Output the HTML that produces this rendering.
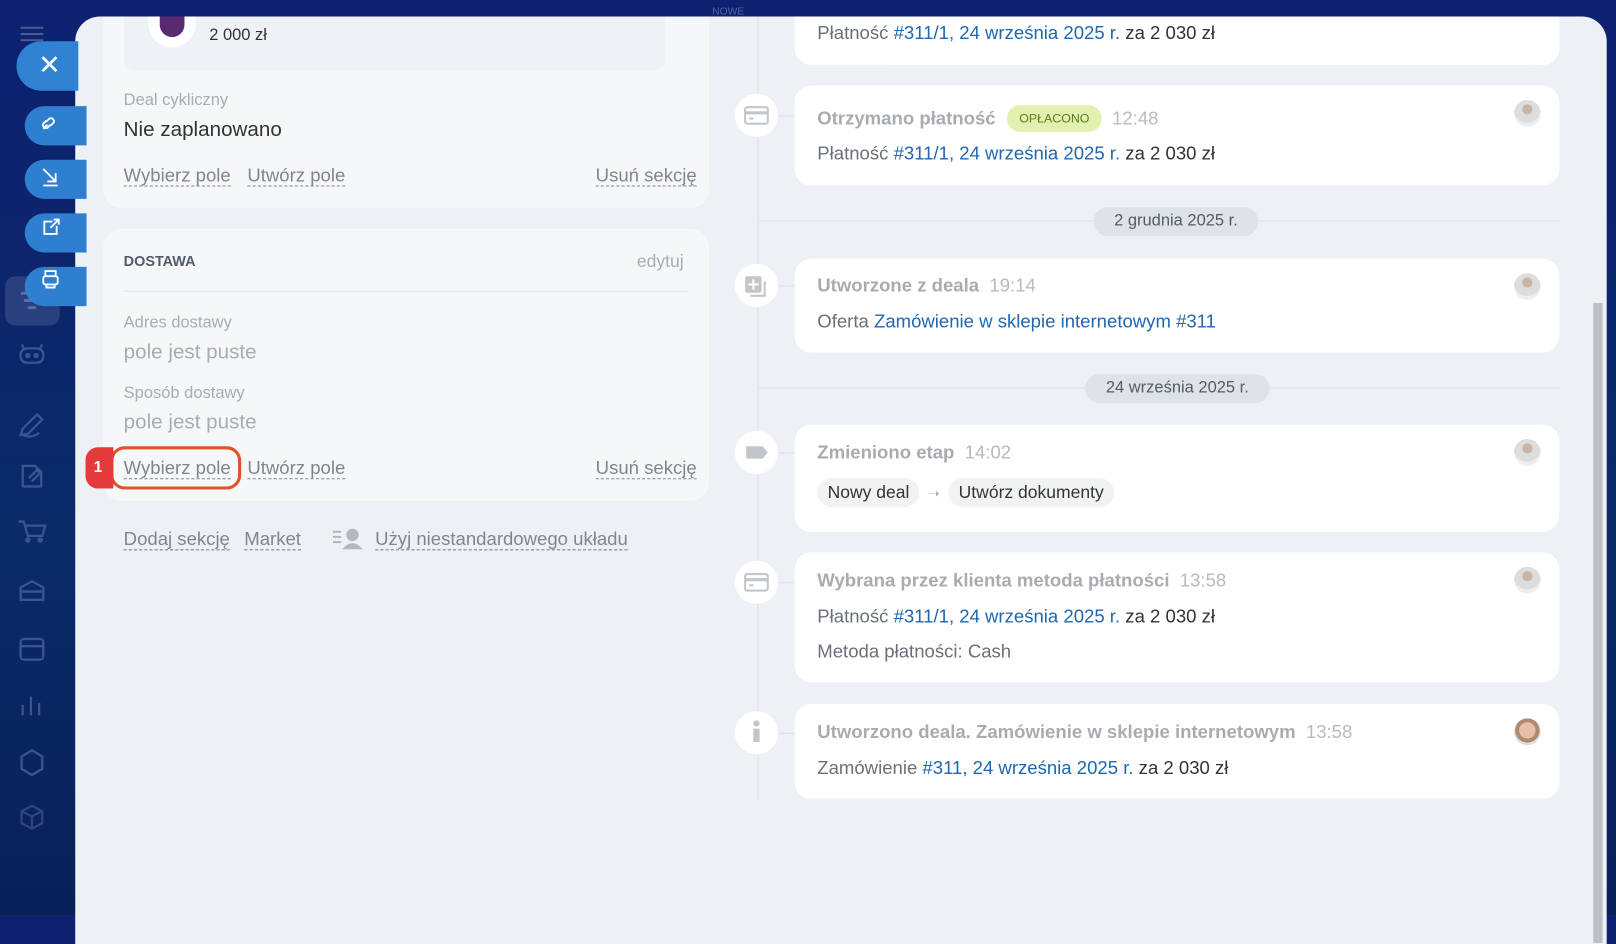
<!DOCTYPE html>
<html><head><meta charset="utf-8"><style>
*{box-sizing:border-box;margin:0;padding:0}
body{width:1616px;height:915px;overflow:hidden;font-family:"Liberation Sans",sans-serif;background:linear-gradient(180deg,#0d2170 0%,#0a2a68 60%,#082058 100%);position:relative}
#w{position:absolute;left:0;top:0;width:1568px;height:888px;transform:scale(1.0306);transform-origin:0 0}
.panel{position:absolute;left:73px;top:16px;width:1486px;height:900px;background:#edf0f4;border-radius:24px 24px 0 0}
.card{position:absolute;background:#f5f7f9;border-radius:18px}
.t{position:absolute;white-space:nowrap}
.lbl{color:#a8adb3;font-size:16px}
.val{color:#333;font-size:20px}
.empty{color:#a8adb3;font-size:20px}
.lnk{color:#80868e;font-size:18px;border-bottom:1px dashed #80868e;line-height:20px}
.tl{position:absolute;left:735px;width:1px;background:#dde1e6}
.ev{position:absolute;left:771px;width:742px;background:#fff;border-radius:16px}
.ic{position:absolute;left:713px;width:42px;height:42px;border-radius:50%;background:#fff}
.conn{position:absolute;left:755px;width:16px;height:1px;background:#dde1e6}
.h{color:#a8acb1;font-size:18px;font-weight:bold}
.tm{color:#b6bbc0;font-size:18px;font-weight:normal;margin-left:10px}
.b{color:#6a7078;font-size:18px}
.b a{color:#2067b0;text-decoration:none}
.b span{color:#333}
.av{position:absolute;right:18px;top:14px;width:26px;height:26px;border-radius:50%;background:radial-gradient(circle at 50% 35%,#c9b5a5 0 22%,#ddd 24% 60%,#eee 62%)}
.date{position:absolute;height:28px;border-radius:14px;background:#dfe3e8;color:#535c69;font-size:16px;line-height:28px;padding:0 20px}
.btn{position:absolute;left:24px;width:60px;height:38px;background:#2f7fd0;border-radius:19px 0 0 19px}
.pill{display:inline-block;background:#f1f2f4;border-radius:15px;padding:4px 10px;color:#333;font-size:17px}
</style></head><body><div id="w">
<div style="position:absolute;left:20px;top:26px;width:22px;height:2px;background:#4a5a90;box-shadow:0 6px 0 #4a5a90,0 12px 0 #4a5a90"></div>
<div style="position:absolute;left:5px;top:268px;width:53px;height:48px;border-radius:10px;background:#2a3f7e"></div>
<div style="position:absolute;left:20px;top:283px;width:22px;height:3px;border-radius:2px;background:#5a6ea8;box-shadow:3px 7px 0 -0px #5a6ea8"></div>
<div style="position:absolute;left:27px;top:297px;width:8px;height:3px;border-radius:2px;background:#5a6ea8"></div>
<svg style="position:absolute;left:14px;top:330px" width="36" height="500" fill="none" stroke="#3c5490" stroke-width="2.2">
<rect x="6" y="8" width="22" height="14" rx="6"/><circle cx="13" cy="15" r="1.5"/><circle cx="21" cy="15" r="1.5"/><path d="M9 8 l-2 -4 M25 8 l2 -4"/>
<path d="M8 86 L22 72 L27 77 L13 91 L6 92 Z M8 92 q8 4 16 -2"/>
<path d="M8 122 h12 l6 6 v14 h-18 Z M14 134 l8 -8 3 3 -8 8"/>
<path d="M4 176 h5 l4 14 h14 l3 -10 h-20"/><circle cx="13" cy="194" r="1.5"/><circle cx="25" cy="194" r="1.5"/>
<path d="M6 252 v-12 l11 -6 11 6 v12 z M6 244 h22"/>
<rect x="6" y="290" width="22" height="20" rx="3"/><path d="M6 297 h22"/>
<path d="M8 364 v-10 M16 364 v-18 M24 364 v-12"/>
<path d="M17 398 l10 6 v12 l-10 6 -10 -6 v-12 z"/>
<path d="M17 452 l10 5 v12 l-10 5 -10 -5 v-12 z M7 457 l10 5 10 -5 M17 462 v12" stroke="#2c4682"/>
</svg>
<div style="position:absolute;left:691px;top:6px;color:#4d6aa0;font-size:10px">NOWE</div>
<div class="panel"></div>
<div style="position:absolute;left:1546px;top:294px;width:9px;height:621px;background:#bcc0c3"></div>
<div style="position:absolute;left:16px;top:40px;width:60px;height:48px;background:#2f83d2;border-radius:24px 0 0 24px;color:#fff;font-size:26px;line-height:46px;padding-left:21px">✕</div>
<div class="btn" style="top:103px"></div><div class="btn" style="top:155px"></div><div class="btn" style="top:207px"></div><div class="btn" style="top:259px"></div>
<svg style="position:absolute;left:36px;top:108px" width="28" height="180" fill="none" stroke="#fff" stroke-width="1.8">
<path d="M6 17 l4 -4 M9 10 l3 -3 a3 3 0 0 1 4 4 l-3 3 M13 13 l-3 3 a3 3 0 0 1 -4 -4 l3 -3" />
<path d="M6 56 l12 12 M18 60 v8 h-8 M6 72 h14"/>
<path d="M15 107 h-8 v12 h12 v-8 M13 113 l8 -8 M16 105 h5 v5"/>
<rect x="6" y="160" width="14" height="8" rx="2"/><path d="M8 160 v-5 h10 v5 M9 168 v3 h8 v-3"/>
</svg>
<div class="card" style="left:100px;top:16px;width:588px;height:186px;border-radius:0 0 18px 18px"></div>
<div style="position:absolute;left:120px;top:16px;width:526px;height:52px;background:#eef1f5;border-radius:0 0 10px 10px"></div>
<div style="position:absolute;left:144px;top:16px;width:46px;height:30px;border-radius:0 0 23px 23px;background:#fff"></div>
<div style="position:absolute;left:155px;top:16px;width:24px;height:20px;border-radius:0 0 12px 12px;background:#5a2a70"></div>
<div class="t" style="left:203px;top:26px;font-size:16px;color:#333">2 000 zł</div>
<div class="t lbl" style="left:120px;top:89px">Deal cykliczny</div>
<div class="t val" style="left:120px;top:115px">Nie zaplanowano</div>
<div class="t lnk" style="left:120px;top:160px">Wybierz pole</div>
<div class="t lnk" style="left:240px;top:160px">Utwórz pole</div>
<div class="t lnk" style="left:578px;top:160px">Usuń sekcję</div>
<div class="card" style="left:100px;top:222px;width:588px;height:264px"></div>
<div class="t" style="left:120px;top:245px;font-size:14px;font-weight:bold;color:#535c69">DOSTAWA</div>
<div class="t" style="left:618px;top:244px;font-size:17px;color:#a8adb3">edytuj</div>
<div style="position:absolute;left:120px;top:282px;width:548px;height:1px;background:#e2e5e9"></div>
<div class="t lbl" style="left:120px;top:305px">Adres dostawy</div>
<div class="t empty" style="left:120px;top:331px">pole jest puste</div>
<div class="t lbl" style="left:120px;top:373px">Sposób dostawy</div>
<div class="t empty" style="left:120px;top:399px">pole jest puste</div>
<div style="position:absolute;left:107px;top:433px;width:127px;height:42px;border:3px solid #e0522a;border-radius:14px"></div>
<div style="position:absolute;left:83px;top:434px;width:27px;height:40px;background:#e53a3a;border-radius:12px 0 0 12px;color:#fff;font-weight:bold;font-size:15px;line-height:40px;padding-left:8px">1</div>
<div class="t lnk" style="left:120px;top:444px">Wybierz pole</div>
<div class="t lnk" style="left:240px;top:444px">Utwórz pole</div>
<div class="t lnk" style="left:578px;top:444px">Usuń sekcję</div>
<div class="t lnk" style="left:120px;top:513px">Dodaj sekcję</div>
<div class="t lnk" style="left:237px;top:513px">Market</div>
<svg style="position:absolute;left:323px;top:511px" width="30" height="24" fill="#b5b9be"><rect x="0" y="4" width="8" height="2"/><rect x="0" y="9" width="8" height="2"/><rect x="0" y="14" width="8" height="2"/><circle cx="19" cy="8" r="6"/><path d="M9 22 q10 -12 20 0 z"/></svg>
<div class="t lnk" style="left:364px;top:513px">Użyj niestandardowego układu</div>
<div class="tl" style="top:16px;height:760px"></div>
<div class="ev" style="top:16px;height:47px;border-radius:0 0 16px 16px"></div>
<div class="t b" style="left:793px;top:22px">Płatność <a>#311/1, 24 września 2025 r.</a> <span>za 2 030 zł</span></div>
<div style="position:absolute;left:735px;top:214px;width:778px;height:1px;background:#dde1e6"></div>
<div style="position:absolute;left:735px;top:376px;width:778px;height:1px;background:#dde1e6"></div>
<div class="date" style="left:1061px;top:201px">2 grudnia 2025 r.</div>
<div class="date" style="left:1053px;top:363px">24 września 2025 r.</div>
<div class="ic" style="top:91px"></div><div class="conn" style="top:112px"></div>
<div class="ev" style="top:83px;height:97px"><div class="av"></div></div>
<div class="t h" style="left:793px;top:102px">Otrzymano płatność <span style="display:inline-block;background:#e3f1b0;color:#5a7b16;font-size:12px;font-weight:normal;border-radius:13px;padding:6px 12px;margin-left:6px;vertical-align:2px">OPŁACONO</span><span class="tm">12:48</span></div>
<div class="t b" style="left:793px;top:139px">Płatność <a>#311/1, 24 września 2025 r.</a> <span>za 2 030 zł</span></div>
<div class="ic" style="top:256px"></div><div class="conn" style="top:277px"></div>
<div class="ev" style="top:251px;height:91px"><div class="av"></div></div>
<div class="t h" style="left:793px;top:267px">Utworzone z deala<span class="tm">19:14</span></div>
<div class="t b" style="left:793px;top:302px">Oferta <a>Zamówienie w sklepie internetowym #311</a></div>
<div class="ic" style="top:418px"></div><div class="conn" style="top:439px"></div>
<div class="ev" style="top:412px;height:104px"><div class="av"></div></div>
<div class="t h" style="left:793px;top:429px">Zmieniono etap<span class="tm">14:02</span></div>
<div class="t" style="left:793px;top:464px"><span class="pill">Nowy deal</span> <span style="color:#aaa;font-size:13px;margin:0 4px">➝</span> <span class="pill">Utwórz dokumenty</span></div>
<div class="ic" style="top:544px"></div><div class="conn" style="top:565px"></div>
<div class="ev" style="top:536px;height:126px"><div class="av"></div></div>
<div class="t h" style="left:793px;top:553px">Wybrana przez klienta metoda płatności<span class="tm">13:58</span></div>
<div class="t b" style="left:793px;top:588px">Płatność <a>#311/1, 24 września 2025 r.</a> <span>za 2 030 zł</span></div>
<div class="t b" style="left:793px;top:622px">Metoda płatności: Cash</div>
<div class="ic" style="top:690px"></div><div class="conn" style="top:711px"></div>
<div class="ev" style="top:683px;height:92px"><div class="av" style="background:radial-gradient(circle at 50% 45%,#e8c0a8 0 40%,#b08a70 42% 60%,#ddd 62%)"></div></div>
<div class="t h" style="left:793px;top:700px">Utworzono deala. Zamówienie w sklepie internetowym<span class="tm">13:58</span></div>
<div class="t b" style="left:793px;top:735px">Zamówienie <a>#311, 24 września 2025 r.</a> <span>za 2 030 zł</span></div>
<svg style="position:absolute;left:713px;top:0" width="42" height="760" fill="#c2c6cb">
<rect x="10" y="104" width="22" height="16" rx="2" fill="none" stroke="#c2c6cb" stroke-width="2"/><rect x="10" y="108" width="22" height="3"/><rect x="14" y="114" width="4" height="2"/>
<rect x="10" y="268" width="16" height="16" rx="2"/><path d="M29 273 v14 h-14" fill="none" stroke="#c2c6cb" stroke-width="2"/><path d="M18 271 v10 M13 276 h10" stroke="#fff" stroke-width="2"/>
<path d="M11 433 h16 l5 6 -5 6 h-16 z"/>
<rect x="10" y="557" width="22" height="16" rx="2" fill="none" stroke="#c2c6cb" stroke-width="2"/><rect x="10" y="561" width="22" height="3"/><rect x="14" y="567" width="4" height="2"/>
<circle cx="21" cy="702" r="3"/><rect x="18" y="707" width="6" height="13"/>
</svg>
</div></body></html>
